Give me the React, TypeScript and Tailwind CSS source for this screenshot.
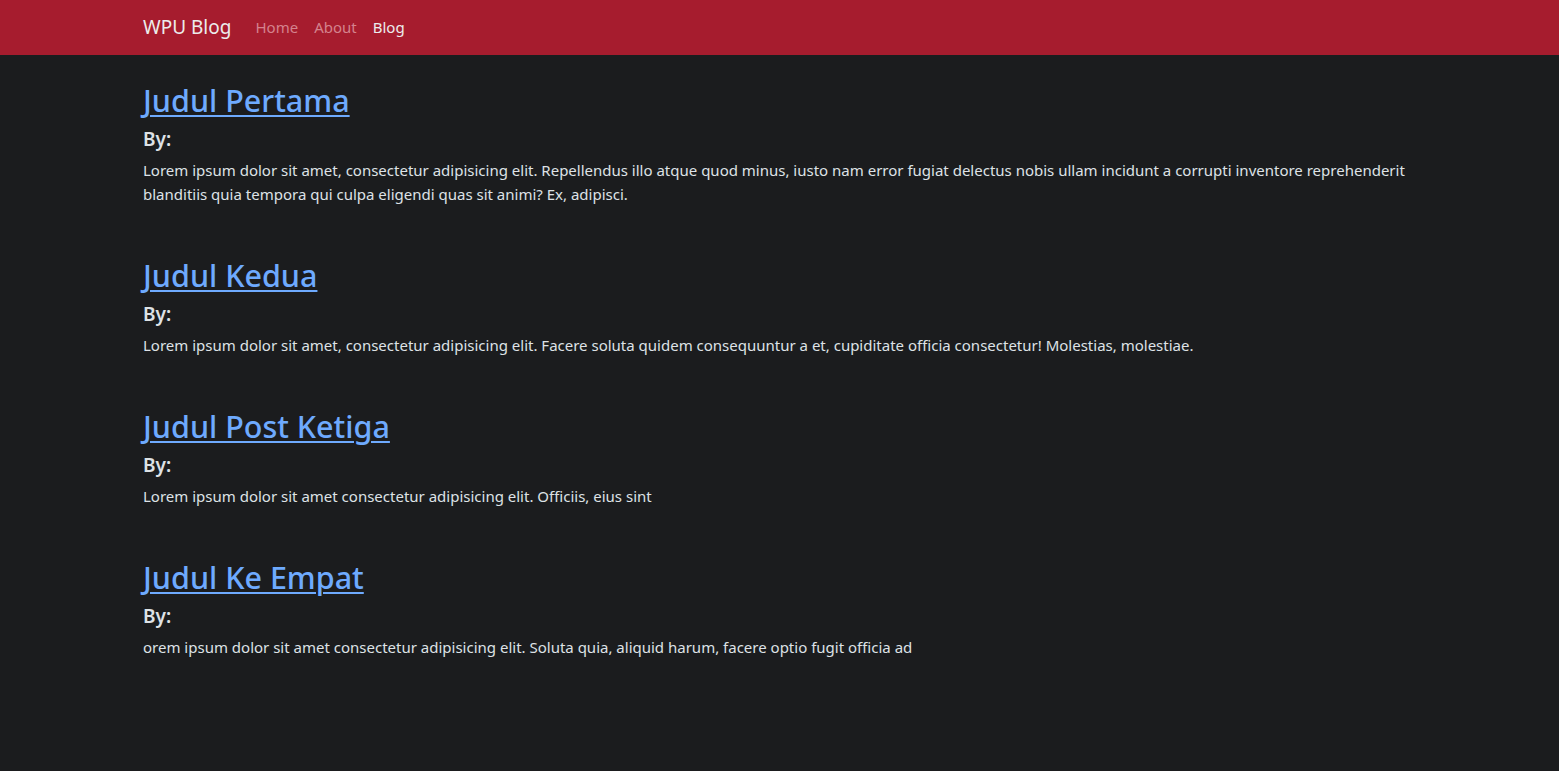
const posts = [
  {
    title: "Judul Pertama",
    body: "Lorem ipsum dolor sit amet, consectetur adipisicing elit. Repellendus illo atque quod minus, iusto nam error fugiat delectus nobis ullam incidunt a corrupti inventore reprehenderit blanditiis quia tempora qui culpa eligendi quas sit animi? Ex, adipisci.",
  },
  {
    title: "Judul Kedua",
    body: "Lorem ipsum dolor sit amet, consectetur adipisicing elit. Facere soluta quidem consequuntur a et, cupiditate officia consectetur! Molestias, molestiae.",
  },
  {
    title: "Judul Post Ketiga",
    body: "Lorem ipsum dolor sit amet consectetur adipisicing elit. Officiis, eius sint",
  },
  {
    title: "Judul Ke Empat",
    body: "orem ipsum dolor sit amet consectetur adipisicing elit. Soluta quia, aliquid harum, facere optio fugit officia ad",
  },
];

export default function App() {
  return (
    <div className="min-h-[771px] bg-[#1b1c1e] font-['Noto_Sans',sans-serif] text-[#dee2e6]">
      {/* Navbar */}
      <nav className="h-[55px] bg-[#a61c2e]">
        <div className="mx-auto flex h-full w-[1273px] items-center">
          <a href="#" className="mr-6 text-[19px] text-[#ececec]">WPU Blog</a>
          <div className="flex items-center gap-4 text-[15px]">
            <a href="#" className="text-[#d4828d]">Home</a>
            <a href="#" className="text-[#d4828d]">About</a>
            <a href="#" className="text-[#ececec]">Blog</a>
          </div>
        </div>
      </nav>

      {/* Posts */}
      <main className="mx-auto w-[1273px] pt-[26px]">
        {posts.map((post) => (
          <article key={post.title} className="mb-[50px]">
            <h2 className="mb-[8px] text-[30.5px] leading-[38px] font-medium">
              <a href="#" className="text-[#6eaafe] underline decoration-[2px] underline-offset-[3px]">
                {post.title}
              </a>
            </h2>
            <h5 className="mb-[7px] text-[19px] leading-6 font-semibold">By:</h5>
            <p className="text-[15px] leading-6">{post.body}</p>
          </article>
        ))}
      </main>
    </div>
  );
}
